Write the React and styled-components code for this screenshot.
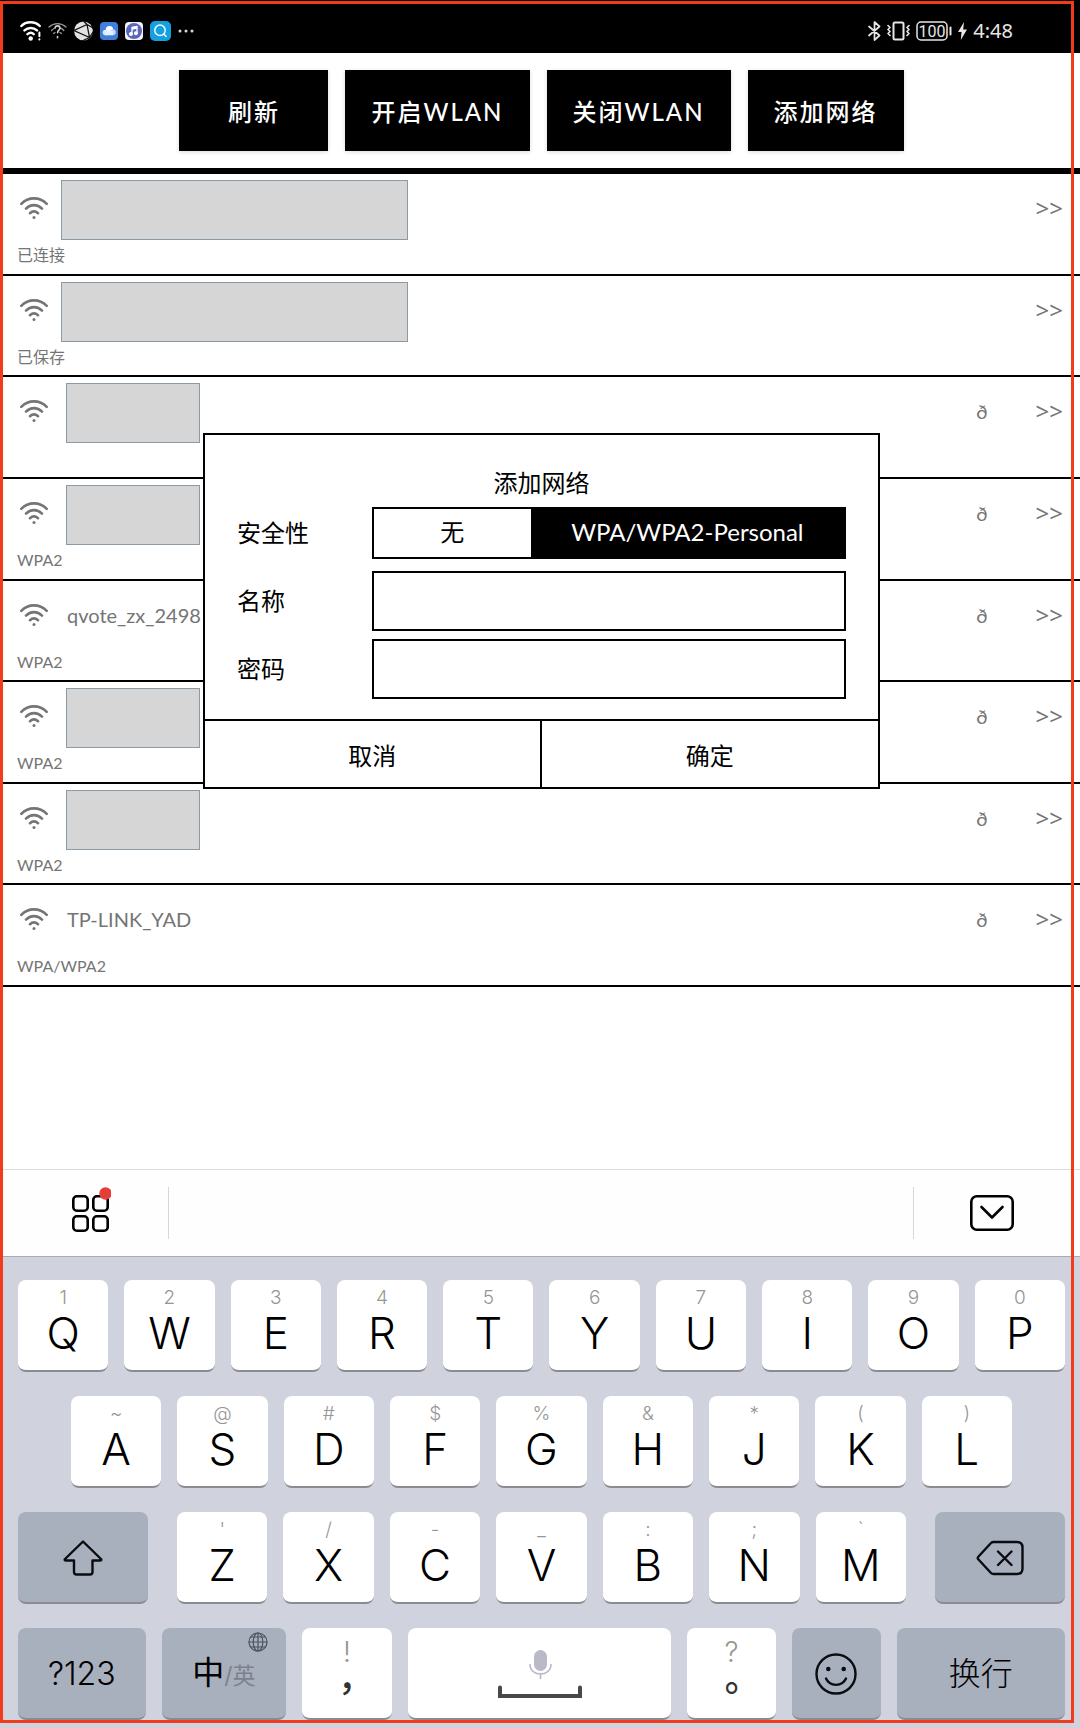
import React, { useState } from "react";
import styled, { createGlobalStyle, css } from "styled-components";

const ink = "#000";
const muted = "#757575";
const uiFont = '"Lato", "Noto Sans CJK SC", sans-serif';
const keyFont = '"Inter", "Noto Sans CJK SC", sans-serif';

const GlobalStyle = createGlobalStyle`
  *, *::before, *::after { box-sizing: border-box; }
  body { margin: 0; background: #fff; }
  button, input { font: inherit; color: inherit; }
  button { margin: 0; padding: 0; border: 0; background: none; cursor: pointer; }
  svg { display: block; flex: none; }
`;

const Screen = styled.div`
  position: relative;
  display: flex;
  flex-direction: column;
  min-height: 100vh;
  font-family: ${uiFont};
  color: ${ink};
`;

const Frame = styled.div`
  position: absolute;
  inset: 1px 6px 5px 0;
  border: 3px solid #f23a1c;
  pointer-events: none;
  z-index: 2;
`;

const StatusBar = styled.header`
  display: flex;
  justify-content: space-between;
  align-items: center;
  height: 53px;
  padding: 8px 67px 0 20px;
  background: #000;
  color: #e6e6e6;
`;

const StatusGroup = styled.div`
  display: flex;
  align-items: center;
  gap: ${(p) => p.$gap}px;
`;

const Clock = styled.span`
  font-family: "Noto Sans", sans-serif;
  font-size: 20px;
  line-height: 24px;
`;

const Main = styled.main`
  position: relative;
  flex: 1;
`;

const Toolbar = styled.nav`
  display: flex;
  justify-content: center;
  gap: 17px;
  padding: 17px 0 17px 3px;
  border-bottom: 6px solid ${ink};
`;

const ToolButton = styled.button`
  min-width: 149px;
  height: 81px;
  padding: 0 26px;
  background: ${ink};
  color: #fff;
  font-size: 24px;
  font-weight: 500;
  letter-spacing: 2px;
  box-shadow: 0 1px 4px rgba(0, 0, 0, 0.15);
`;

const NetworkList = styled.ul`
  display: grid;
  grid-auto-rows: 1fr;
  min-height: 813px;
  margin: 0;
  padding: 0;
  list-style: none;
  color: ${muted};
`;

const NetworkRow = styled.li`
  padding: 0 17px;
  border-bottom: 2px solid ${ink};
`;

const NetworkLine = styled.div`
  display: flex;
  align-items: center;
  height: 68px;
  padding-left: 3px;
  font-size: 20px;
`;

const NetworkName = styled.span`
  flex: 1;
  margin-left: 19px;
`;

const Masked = styled.span`
  width: ${(p) => (p.$wide ? 347 : 134)}px;
  height: 60px;
  margin: 4px auto 0 ${(p) => (p.$wide ? 13 : 18)}px;
  border: 1px solid #8a9ba5;
  background: #d6d6d6;
`;

const Lock = styled.span`
  margin-right: 48px;
`;

const More = styled.button`
  font-family: "Noto Sans", sans-serif;
  font-size: 24px;
  line-height: 28px;
`;

const NetworkNote = styled.div`
  font-size: 16px;
  line-height: 26px;
  height: 26px;
`;

const Overlay = styled.div`
  position: absolute;
  inset: 0;
  display: grid;
  place-items: center;
  padding-left: 3px;
`;

const Dialog = styled.form`
  width: 677px;
  max-width: 100%;
  border: 2px solid ${ink};
  background: #fff;
  font-size: 24px;
`;

const DialogBody = styled.div`
  display: grid;
  grid-template-columns: 135px 1fr;
  row-gap: 8px;
  align-items: center;
  padding: 32px 32px 20px;
`;

const DialogTitle = styled.h2`
  grid-column: 1 / -1;
  margin: 0;
  font-size: inherit;
  font-weight: 400;
  line-height: 32px;
  text-align: center;
`;

const fieldBox = css`
  width: 100%;
  border: 2px solid ${ink};
  border-radius: 0;
  background: #fff;
`;

const GroupLabel = styled.span`
  line-height: 52px;
  margin-bottom: 4px;
`;

const FieldLabel = styled.label`
  line-height: 60px;
`;

const Field = styled.input`
  ${fieldBox}
  height: 60px;
  padding: 0 12px;
  outline: none;
`;

const Segments = styled.div`
  ${fieldBox}
  display: grid;
  grid-template-columns: 1fr 2fr;
  height: 52px;
  margin-bottom: 4px;
`;

const Segment = styled.label`
  display: grid;
  place-items: center;
  line-height: 46px;
  padding-bottom: 2px;
  background: ${(p) => (p.$on ? ink : "#fff")};
  color: ${(p) => (p.$on ? "#fff" : ink)};
  cursor: pointer;

  input { appearance: none; position: absolute; margin: 0; }
`;

const DialogActions = styled.div`
  display: grid;
  grid-template-columns: 1fr 1fr;
  border-top: 2px solid ${ink};
`;

const DialogButton = styled.button`
  height: 66px;

  &:first-child { border-right: 2px solid ${ink}; }
`;

const CandidateBar = styled.div`
  display: flex;
  justify-content: space-between;
  align-items: center;
  height: 88px;
  padding: 0 11px 0 13px;
  border-top: 1px solid #dcdcdc;
  border-bottom: 1px solid #a9abb2;
  background: #fefefe;
`;

const BarButton = styled.button`
  display: grid;
  place-items: center;
  width: 156px;
  height: 52px;
  border: solid #d8d8d8;
  border-width: ${(p) => (p.$end ? "0 0 0 1px" : "0 1px 0 0")};
`;

const Keyboard = styled.section`
  display: grid;
  row-gap: 24px;
  padding: 23px 15px 8px 18px;
  background: #d0d2dd;
  font-family: ${keyFont};
`;

const KeyRow = styled.div`
  display: flex;
  gap: ${(p) => p.$gap || 16}px;
  padding: 0 ${(p) => p.$inset || 0}px;
`;

const KeyGroup = styled(KeyRow)`
  flex: 1;
`;

const Key = styled.button`
  position: relative;
  flex: ${(p) => p.$span || 90} 1 0;
  display: flex;
  flex-direction: column;
  align-items: center;
  justify-content: ${(p) => (p.$center ? "center" : "flex-start")};
  min-width: 0;
  height: 92px;
  padding-top: ${(p) => (p.$center ? 2 : 6)}px;
  border-bottom: 2px solid #8b8c91;
  border-radius: 8px;
  background: ${(p) => (p.$dark ? "#a8afbd" : "#fff")};
`;

const WideKey = styled(Key)`
  flex: 0 0 130px;
`;

const Hint = styled.span`
  color: #969696;
  font-size: ${(p) => (p.$large ? 28 : 19)}px;
  font-weight: 300;
  line-height: ${(p) => (p.$large ? 36 : 24)}px;
`;

const Letter = styled.span`
  font-size: 44px;
  font-weight: 300;
  line-height: 46px;
`;

const Mark = styled.span`
  color: #333;
  font-family: "Noto Sans CJK TC", sans-serif;
  font-size: 36px;
  font-weight: 500;
  line-height: 32px;
`;

const KeyText = styled.span`
  font-size: 32px;
  font-weight: ${(p) => (p.$strong ? 400 : 300)};
  line-height: 44px;

  small { color: #7d828d; font-size: 23px; font-weight: 400; }
`;

const GlobeBadge = styled.span`
  position: absolute;
  top: 4px;
  right: 18px;
`;

const Line = ({ w, h, sw = 2, color = "currentColor", children }) => (
  <svg width={w} height={h} viewBox={`0 0 ${w} ${h}`} fill="none" stroke={color}
    strokeWidth={sw} strokeLinecap="round" strokeLinejoin="round" aria-hidden="true">
    {children}
  </svg>
);

const WifiIcon = () => (
  <Line w={28} h={24} sw={2.6}>
    <path d="M1.300 7.800C8.500.6 19.500.6 26.700 7.800M6 12.600c4.600-4.600 11.400-4.600 16 0M10 17.200c2.400-2.200 5.600-2.200 8 0" />
    <circle cx="14" cy="21.500" r="1.500" fill="currentColor" stroke="none" />
  </Line>
);

const WifiAlertIcon = () => (
  <Line w={21} h={20} sw={2.4} color="#fff">
    <path d="M1.400 5C6 0 15 0 19.800 5M4.500 9.400c3.500-3.300 9-3.300 12.500 0M7.500 13.200c2-1.700 4.500-1.700 6.200 0" />
    <circle cx="10.700" cy="17.500" r="2.200" fill="#fff" stroke="none" />
    <path d="M19.400 11.500v3.800M19.400 18.300v.2" strokeWidth="2" />
  </Line>
);

const WifiUnknownIcon = () => (
  <Line w={19} h={18} sw={1.3} color="#9a9a9a">
    <path d="M1 5C6 .5 13 .5 18 5M3.500 8.500C5 7 6 6.300 7 6M12 6c1.500.4 2.800 1.200 3.800 2.500M5.500 11.500l1.500-1M13.500 11.500l-1.500-1" />
    <path d="M7.200 5.800c.3-2.600 4.700-2.600 4.700.3 0 1.900-2.300 2.200-2.300 4.600M9.500 14.500v1.200" stroke="#d0d0d0" strokeWidth="1.600" />
  </Line>
);

const BallIcon = () => (
  <Line w={19} h={20} sw={1.3} color="#111">
    <circle cx="9.500" cy="10" r="9.400" fill="#e2e2e2" stroke="none" />
    <path d="M0 9.500L13 3.500 15.500 16.500ZM13 3.500L9.500 0M13 3.500L19 7M15.500 16.500L19 11M15.500 16.500L8 20" />
  </Line>
);

const CloudIcon = () => (
  <Line w={18} h={18} sw={0}>
    <rect width="18" height="18" rx="4" fill="#3f80dc" />
    <circle cx="9.500" cy="7.700" r="3.700" fill="#fff" />
    <circle cx="5.500" cy="10.500" r="2.800" fill="#dcebff" />
    <circle cx="12.800" cy="10.300" r="3" fill="#c3dcff" />
    <rect x="5" y="9" width="8" height="4.300" fill="#e6f1ff" />
  </Line>
);

const MusicIcon = () => (
  <Line w={18} h={18} sw={1.3} color="#fff">
    <rect width="18" height="18" rx="4" fill="#f4f4fb" stroke="none" />
    <circle cx="9" cy="9" r="8" fill="#5a66bd" stroke="none" />
    <path d="M7 12V5.500l5-1V11M7 7l5-1" />
    <circle cx="5.900" cy="12" r="1.300" fill="#fff" />
    <circle cx="10.900" cy="11.200" r="1.300" fill="#fff" />
  </Line>
);

const SearchIcon = () => (
  <Line w={21} h={20} sw={1.5} color="#e8fbff">
    <rect width="21" height="20" rx="5" fill="#159fdf" stroke="none" />
    <circle cx="10" cy="9.300" r="5.200" />
    <path d="M13.800 13l2.300 2.500" />
  </Line>
);

const DotsIcon = () => (
  <Line w={16} h={4} sw={0}>
    {[2, 8, 14].map((x) => <circle key={x} cx={x} cy="2" r="1.500" fill="#d8d8d8" />)}
  </Line>
);

const BluetoothIcon = () => (
  <Line w={13} h={20} sw={1.7}>
    <path d="M1 5.500l10.500 9L6.500 19V1l5 4.500L1 14.500" />
  </Line>
);

const VibrateIcon = () => (
  <Line w={23} h={20} sw={2}>
    <rect x="6.500" y="1.500" width="10" height="17" rx="1.500" />
    <path d="M1 4.500l2 2-2 2 2 2-2 2 2 2M22 4.500l-2 2 2 2-2 2 2 2-2 2" strokeWidth="1.600" />
  </Line>
);

const BatteryIcon = () => (
  <Line w={36} h={20} sw={1.5}>
    <rect x="1" y="1" width="30" height="18" rx="4" />
    <path d="M34.500 6.500v7" strokeWidth="2" />
    <text x="16" y="16" textAnchor="middle" fontFamily="Roboto, sans-serif" fontSize="16" fill="currentColor" stroke="none">100</text>
  </Line>
);

const BoltIcon = () => (
  <Line w={9} h={18} sw={0}>
    <path d="M6 0L0 10h3.500L2.800 18 9 7.500H5.200Z" fill="currentColor" />
  </Line>
);

const AppsIcon = () => (
  <Line w={40} h={52} sw={2.6} color="#000">
    {[[2.3, 9.3], [22.3, 9.3], [2.3, 29.3], [22.3, 29.3]].map(([x, y]) => (
      <rect key={`${x}-${y}`} x={x} y={y} width="14.400" height="14.400" rx="3.500" />
    ))}
    <circle cx="34.500" cy="6.500" r="6.200" fill="#e53e38" stroke="none" />
  </Line>
);

const CollapseIcon = () => (
  <Line w={44} h={36} sw={2.6} color="#000">
    <rect x="1.300" y="1.300" width="41.400" height="33.400" rx="5.500" />
    <path d="M11.500 12L22 22.500 32.500 12" />
  </Line>
);

const ShiftIcon = () => (
  <Line w={40} h={36} sw={2.4} color="#0a0c10">
    <path d="M20 1.500L38 19q1 1.500-1 1.500H29.500V32q0 2.500-2.500 2.500H13.500Q11 34.500 11 32V20.500H3q-2 0-1-1.500Z" />
  </Line>
);

const BackspaceIcon = () => (
  <Line w={48} h={36} sw={2.4} color="#0a0c10">
    <path d="M17.500 2H41q5.500 0 5.500 5.500v21Q46.500 34 41 34H17.500q-1.500 0-2.500-1L2.500 19.500q-1.500-1.500 0-3L15 3q1-1 2.500-1ZM22 11.500L35.500 25M35.500 11.500L22 25" />
  </Line>
);

const GlobeIcon = () => (
  <Line w={20} h={20} sw={1.2} color="#4c525e">
    <circle cx="10" cy="10" r="9" />
    <ellipse cx="10" cy="10" rx="4.800" ry="9" />
    <path d="M10 1v18M1 10h18M3 5h14M3 15h14" />
  </Line>
);

const SpaceIcon = () => (
  <Line w={86} h={50} sw={2}>
    <rect x="37" y="1" width="13" height="21" rx="6.500" fill="#b9b9c8" stroke="none" />
    <path d="M33 15.500c0 12.500 21 12.500 21 0M43.500 25v4.500" stroke="#b9b9c8" strokeWidth="1.600" />
    <path d="M3 38.500v8.500h80v-8.500" stroke="#484848" strokeWidth="4" strokeLinejoin="miter" />
  </Line>
);

const SmileIcon = () => (
  <Line w={42} h={42} sw={2.4} color="#0a0c10">
    <circle cx="21" cy="21" r="19.500" />
    <path d="M11 25.500c4 8.500 16 8.500 20 0" />
    <circle cx="13.300" cy="16" r="2.300" fill="#0a0c10" stroke="none" />
    <circle cx="28.700" cy="16" r="2.300" fill="#0a0c10" stroke="none" />
  </Line>
);

const networks = [
  { masked: "wide", note: "已连接" },
  { masked: "wide", note: "已保存" },
  { masked: "short", locked: true },
  { masked: "short", note: "WPA2", locked: true },
  { name: "qvote_zx_2498", note: "WPA2", locked: true },
  { masked: "short", note: "WPA2", locked: true },
  { masked: "short", note: "WPA2", locked: true },
  { name: "TP-LINK_YAD", note: "WPA/WPA2", locked: true },
];

const topKeys = ["1Q", "2W", "3E", "4R", "5T", "6Y", "7U", "8I", "9O", "0P"];
const homeKeys = ["~A", "@S", "#D", "$F", "%G", "&H", "*J", "(K", ")L"];
const lowKeys = ["'Z", "/X", "-C", "_V", ":B", ";N", "`M"];

const LetterKeys = ({ keys }) =>
  keys.map(([hint, letter]) => (
    <Key type="button" key={letter}>
      <Hint>{hint}</Hint>
      <Letter>{letter}</Letter>
    </Key>
  ));

const securityOptions = ["无", "WPA/WPA2-Personal"];

export default function App() {
  const [security, setSecurity] = useState(securityOptions[1]);

  return (
    <Screen lang="zh-CN">
      <GlobalStyle />
      <StatusBar>
        <StatusGroup $gap={7}>
          <WifiAlertIcon />
          <WifiUnknownIcon />
          <BallIcon />
          <CloudIcon />
          <MusicIcon />
          <SearchIcon />
          <DotsIcon />
        </StatusGroup>
        <StatusGroup $gap={6}>
          <BluetoothIcon />
          <VibrateIcon />
          <BatteryIcon />
          <BoltIcon />
          <Clock>4:48</Clock>
        </StatusGroup>
      </StatusBar>

      <Main>
        <Toolbar>
          {["刷新", "开启WLAN", "关闭WLAN", "添加网络"].map((label) => (
            <ToolButton type="button" key={label}>{label}</ToolButton>
          ))}
        </Toolbar>

        <NetworkList>
          {networks.map((n, i) => (
            <NetworkRow key={i}>
              <NetworkLine>
                <WifiIcon />
                {n.masked ? <Masked $wide={n.masked === "wide"} /> : <NetworkName>{n.name}</NetworkName>}
                {n.locked && <Lock>ð</Lock>}
                <More type="button">&gt;&gt;</More>
              </NetworkLine>
              <NetworkNote>{n.note}</NetworkNote>
            </NetworkRow>
          ))}
        </NetworkList>

        <Overlay>
          <Dialog role="dialog" aria-labelledby="dialog-title" onSubmit={(e) => e.preventDefault()}>
            <DialogBody>
              <DialogTitle id="dialog-title">添加网络</DialogTitle>
              <GroupLabel id="security-label">安全性</GroupLabel>
              <Segments role="radiogroup" aria-labelledby="security-label">
                {securityOptions.map((option) => (
                  <Segment key={option} $on={security === option}>
                    <input type="radio" name="security" checked={security === option}
                      onChange={() => setSecurity(option)} />
                    {option}
                  </Segment>
                ))}
              </Segments>
              <FieldLabel htmlFor="ssid">名称</FieldLabel>
              <Field id="ssid" type="text" />
              <FieldLabel htmlFor="password">密码</FieldLabel>
              <Field id="password" type="password" />
            </DialogBody>
            <DialogActions>
              <DialogButton type="button">取消</DialogButton>
              <DialogButton type="submit">确定</DialogButton>
            </DialogActions>
          </Dialog>
        </Overlay>
      </Main>

      <CandidateBar>
        <BarButton type="button" aria-label="菜单"><AppsIcon /></BarButton>
        <BarButton type="button" aria-label="收起键盘" $end><CollapseIcon /></BarButton>
      </CandidateBar>

      <Keyboard>
        <KeyRow><LetterKeys keys={topKeys} /></KeyRow>
        <KeyRow $inset={53}><LetterKeys keys={homeKeys} /></KeyRow>
        <KeyRow $gap={29}>
          <WideKey type="button" aria-label="上档" $dark $center><ShiftIcon /></WideKey>
          <KeyGroup><LetterKeys keys={lowKeys} /></KeyGroup>
          <WideKey type="button" aria-label="删除" $dark $center><BackspaceIcon /></WideKey>
        </KeyRow>
        <KeyRow>
          <Key type="button" $span={128} $dark $center><KeyText>?123</KeyText></Key>
          <Key type="button" $span={125} $dark $center>
            <KeyText $strong>中<small>/英</small></KeyText>
            <GlobeBadge><GlobeIcon /></GlobeBadge>
          </Key>
          <Key type="button" $span={90}><Hint $large>!</Hint><Mark>，</Mark></Key>
          <Key type="button" $span={264} aria-label="空格" $center><SpaceIcon /></Key>
          <Key type="button" $span={89}><Hint $large>?</Hint><Mark>。</Mark></Key>
          <Key type="button" $span={89} aria-label="表情" $dark $center><SmileIcon /></Key>
          <Key type="button" $span={169} $dark $center><KeyText>换行</KeyText></Key>
        </KeyRow>
      </Keyboard>

      <Frame />
    </Screen>
  );
}
